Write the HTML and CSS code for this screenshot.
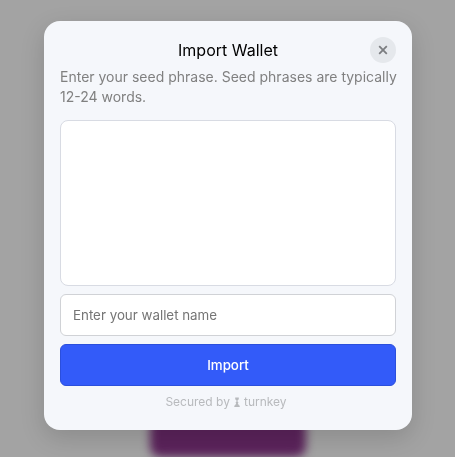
FILE: index.html
```html
<!DOCTYPE html>
<html lang="en">
<head>
    <meta charset="UTF-8">
    <meta name="viewport" content="width=device-width, initial-scale=1.0">
    <title>Import Wallet</title>
    <link rel="stylesheet" href="styles.css">
</head>
<body>
    <div class="page" aria-hidden="true">
        <div class="page-button"></div>
    </div>

    <div class="overlay">
        <form class="modal" role="dialog" aria-labelledby="modal-title">
            <div class="modal-header">
                <h1 id="modal-title" class="modal-title">Import Wallet</h1>
                <button type="button" class="close-button" aria-label="Close">
                    <svg width="10" height="10" viewBox="0 0 10 10" fill="none" stroke="currentColor" stroke-width="1.8">
                        <path d="M1.2 1.2l7.6 7.6M8.8 1.2l-7.6 7.6"/>
                    </svg>
                </button>
            </div>
            <label class="description" for="seed-phrase">Enter your seed phrase. Seed phrases are typically<br>12-24 words.</label>
            <textarea id="seed-phrase" class="field seed-phrase"></textarea>
            <input type="text" class="field wallet-name" placeholder="Enter your wallet name" aria-label="Wallet name">
            <button type="submit" class="import-button">Import</button>
            <div class="footer">
                <span>Secured by</span>
                <a class="brand" href="#">
                    <svg width="6" height="10" viewBox="0 0 6 10" fill="currentColor">
                        <path d="M1.2 .6h3.6v1.6L3.5 3.4v1.2l1 .8-.7.9L5 8.4h.7V10H.3V8.4H1l1.2-2.1-.7-.9 1-.8V3.4L1.2 2.2z"/>
                    </svg>
                    <span>turnkey</span>
                </a>
            </div>
        </form>
    </div>
</body>
</html>
```

FILE: styles.css
```css
* {
    box-sizing: border-box;
}
body {
    margin: 0;
    min-height: 100vh;
    background-color: #a3a3a3;
    font-family: Inter, "Liberation Sans", sans-serif;
}
button, input, textarea {
    font-family: inherit;
}
/* blurred page behind the modal */
.page {
    display: flex;
    flex-direction: column;
    justify-content: flex-end;
    align-items: center;
    height: 100vh;
    overflow: hidden;
}
.page-button {
    width: 156px;
    height: 40px;
    border-radius: 10px;
    background-color: #5b235b;
    filter: blur(5px);
}
.overlay {
    position: fixed;
    inset: 0;
    padding: 21px 43px 27px 44px;
}
.modal {
    display: flex;
    flex-direction: column;
    padding: 16px 16px 20px;
    border-radius: 16px;
    background-color: #f5f7fb;
    box-shadow: 0 8px 24px rgba(0, 0, 0, 0.15);
}
.modal-header {
    display: grid;
    grid-template-columns: 26px 1fr 26px;
    align-items: center;
    margin-bottom: 4px;
}
.modal-title {
    grid-column: 2;
    margin: 0;
    font-size: 16px;
    font-weight: 400;
    line-height: 26px;
    text-align: center;
    color: #000;
}
.close-button {
    display: flex;
    align-items: center;
    justify-content: center;
    width: 26px;
    height: 26px;
    padding: 0;
    border: none;
    border-radius: 50%;
    background-color: #e5e8ec;
    color: #7b7d80;
    cursor: pointer;
}
.description {
    margin-bottom: 13px;
    font-size: 14px;
    line-height: 20px;
    white-space: nowrap;
    color: #808080;
}
.field {
    width: 100%;
    margin: 0 0 8px;
    padding: 12px;
    border: 1px solid #d0d2d6;
    border-radius: 8px;
    background-color: #fff;
    color: #000;
}
.seed-phrase {
    height: 166px;
    border-color: #d8dbe3;
    resize: none;
}
.wallet-name {
    height: 42px;
    border-radius: 6px;
}
.wallet-name::placeholder {
    color: #757575;
}
.import-button {
    height: 42px;
    border: 1px solid #2b4fdc;
    border-radius: 6px;
    background-color: #335bf9;
    color: #fff;
    font-weight: 500;
    cursor: pointer;
}
.footer {
    display: flex;
    justify-content: center;
    align-items: center;
    gap: 4px;
    margin-top: 8px;
    padding-right: 4px;
    font-size: 12px;
    line-height: 16px;
    color: #b8babd;
}
.brand {
    display: flex;
    align-items: center;
    gap: 4px;
    color: inherit;
    text-decoration: none;
}
```
